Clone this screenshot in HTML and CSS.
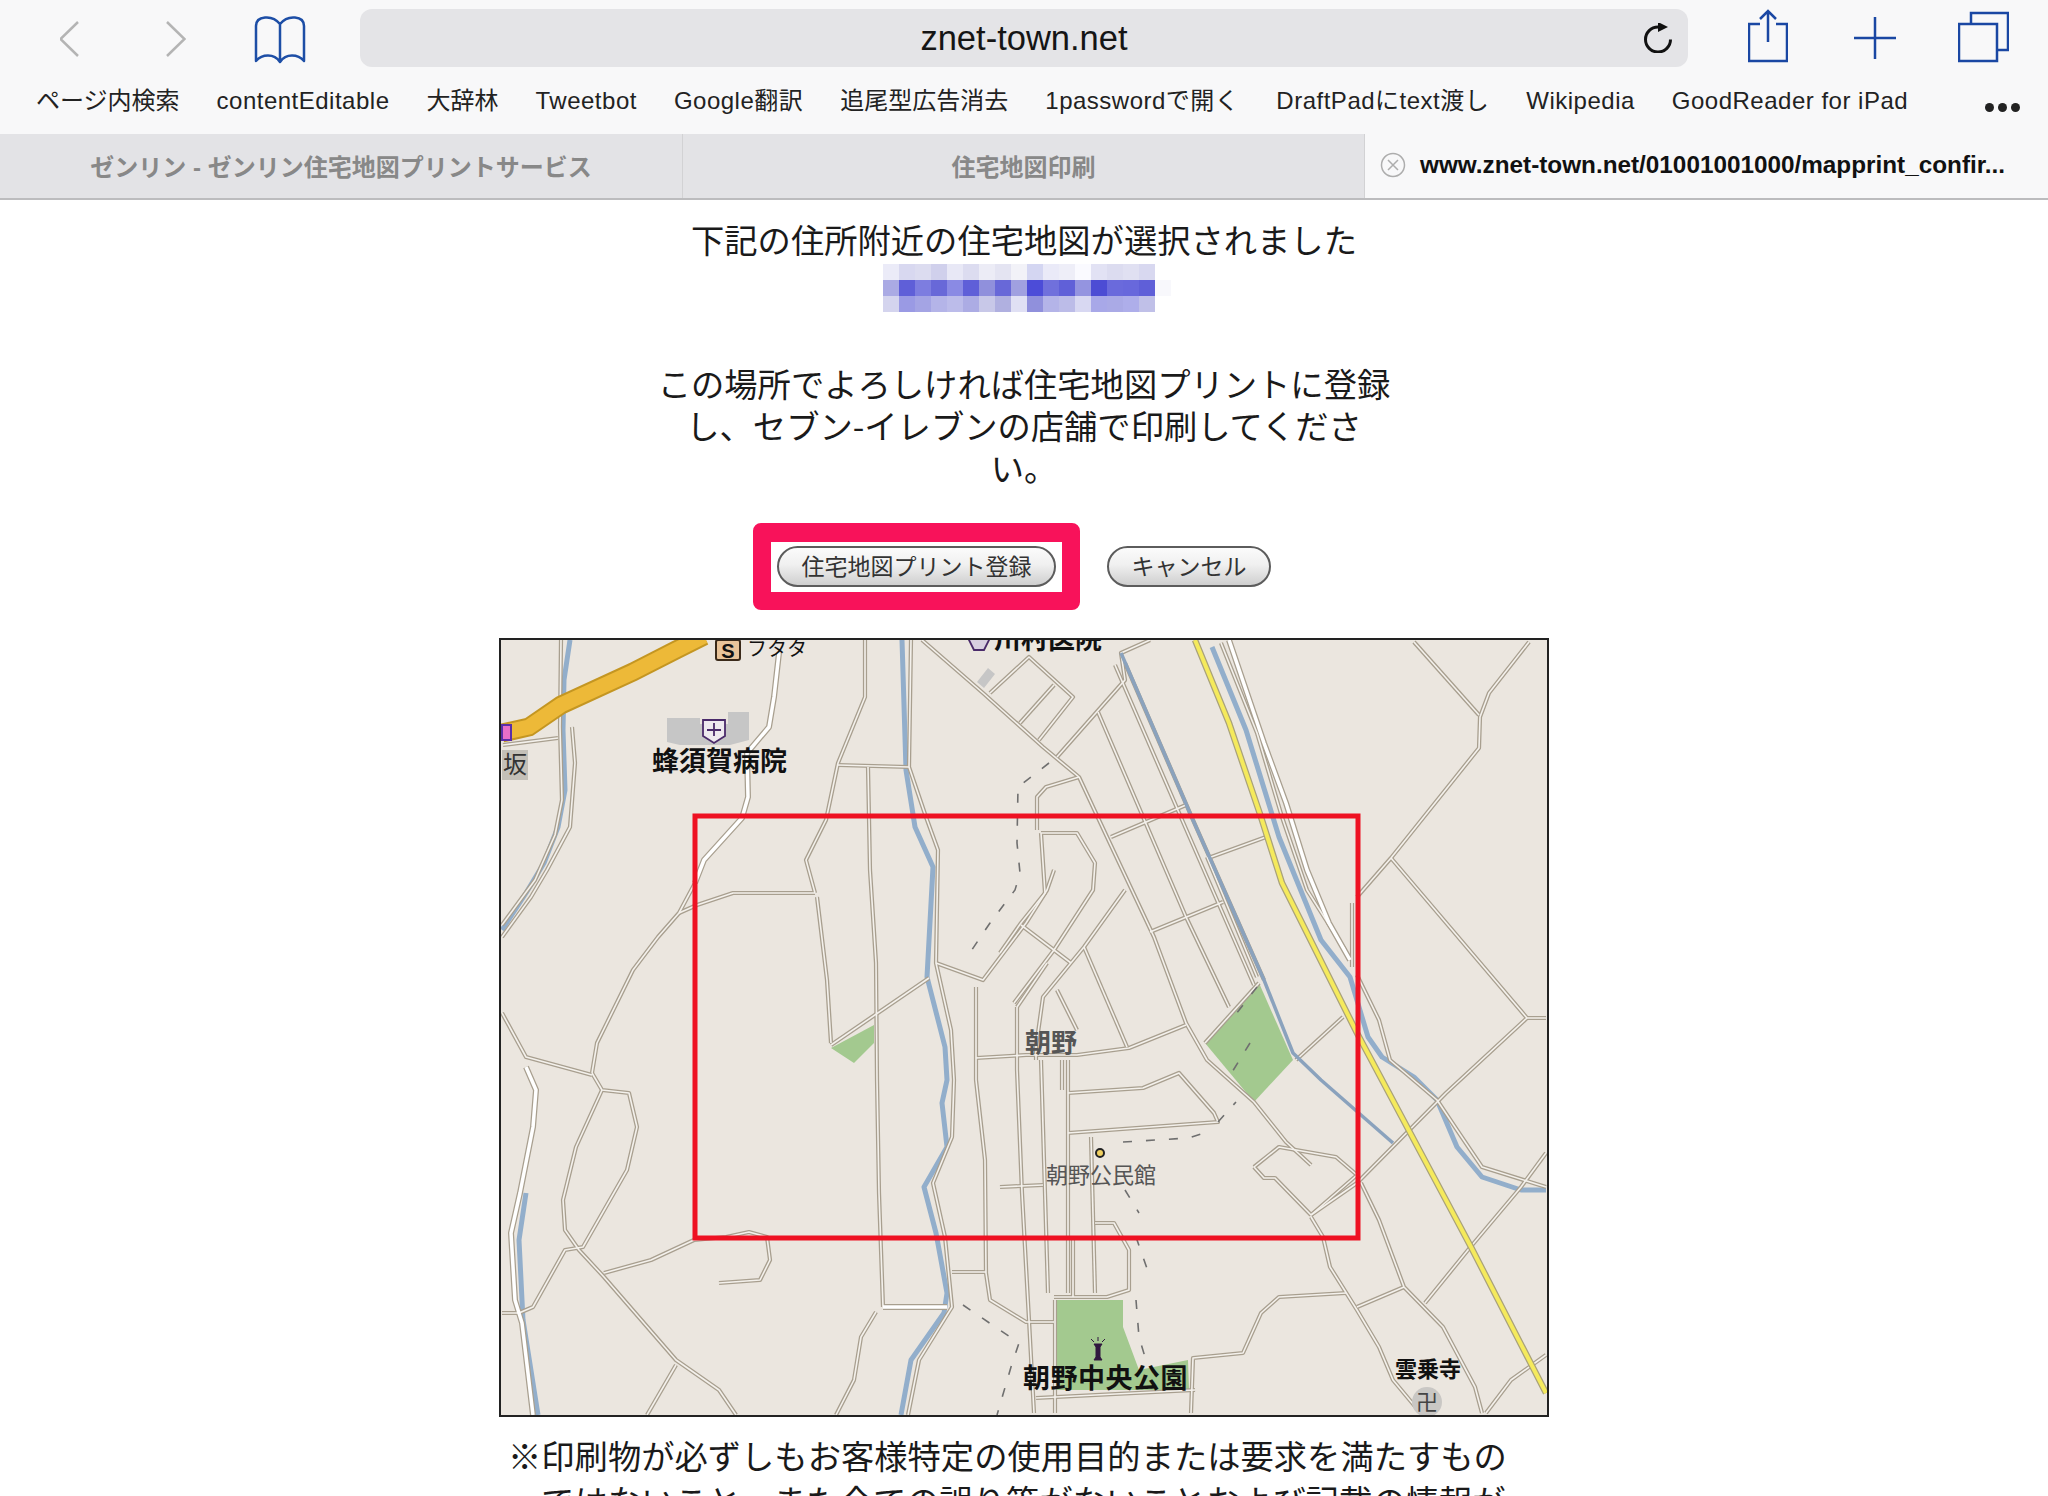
FILE: index.html
```html
<!DOCTYPE html>
<html lang="ja">
<head>
<meta charset="utf-8">
<title>住宅地図印刷</title>
<link rel="stylesheet" href="styles.css">
</head>
<body>
<div class="page">
  <header class="chrome">
    <div class="toolbar">
      <svg class="ic ic-back" viewBox="60 0 20 76"><path class="line-grey" d="M78 22 60.500 39 78 56"/></svg>
      <svg class="ic ic-forward" viewBox="166 0 20 76"><path class="line-grey" d="M167 22 184.500 39 167 56"/></svg>
      <svg class="ic ic-book" viewBox="254 0 52 76"><path class="line-blue" d="M280 62V24C276 19 270 17 265 17.500 259 18 256 21 256 26V61C262 54 274 53 280 62 286 53 298 54 304 61V26C304 21 301 18 295 17.500 290 17 284 19 280 24"/></svg>
      <div class="address">
        <span></span>
        <span class="host">znet-town.net</span>
        <svg class="ic-reload" viewBox="1644 24 28 30"><path class="line-black" d="M1658 28A12.500 12.500 0 1 0 1670.500 40.500"/><path class="fill-black" d="M1658 23 1668 28 1658 33Z"/></svg>
      </div>
      <svg class="ic ic-share" viewBox="1748 0 40 76"><path class="line-blue-2" d="M1760 24H1749V61H1787V24H1776M1768 42V11M1760 19 1768 11 1776 19"/></svg>
      <svg class="ic ic-plus" viewBox="1854 0 42 76"><path class="line-blue-2" d="M1854 38H1896M1875 17V59"/></svg>
      <svg class="ic ic-tabs" viewBox="1958 0 51 76"><path class="line-blue-2" d="M1959 24H1997V61H1959ZM1971 24V13H2008V50H1997"/></svg>
    </div>
    <nav class="bookmarks">
      <a class="mark mark-cjk">ページ内検索</a>
      <a class="mark">contentEditable</a>
      <a class="mark mark-cjk">大辞林</a>
      <a class="mark">Tweetbot</a>
      <a class="mark">Google翻訳</a>
      <a class="mark mark-cjk">追尾型広告消去</a>
      <a class="mark">1passwordで開く</a>
      <a class="mark">DraftPadにtext渡し</a>
      <a class="mark">Wikipedia</a>
      <a class="mark">GoodReader for iPad</a>
      <span class="more"><i></i><i></i><i></i></span>
    </nav>
    <div class="tabs">
      <div class="tab">ゼンリン - ゼンリン住宅地図プリントサービス</div>
      <div class="tab">住宅地図印刷</div>
      <div class="tab tab-active">
        <svg class="tab-close" viewBox="0 0 26 26"><circle cx="13" cy="13" r="11.500"/><path d="M8 8 18 18M18 8 8 18"/></svg>
        <span>www.znet-town.net/01001001000/mapprint_confir...</span>
      </div>
    </div>
  </header>
  <main class="content">
    <p class="lead">下記の住所附近の住宅地図が選択されました</p>
    <div class="mosaic">
      <span style="background:#ebebf8"></span><span style="background:#d8d8f0"></span><span style="background:#dcdcf0"></span><span style="background:#d0d0ec"></span><span style="background:#e8e8f6"></span><span style="background:#dcdcf0"></span><span style="background:#ececf6"></span><span style="background:#e4e4f2"></span><span style="background:#f2f2f8"></span><span style="background:#d4d6f2"></span><span style="background:#eaeaf8"></span><span style="background:#eeeef8"></span><span style="background:#fafaff"></span><span style="background:#e2e2f4"></span><span style="background:#dcdcf0"></span><span style="background:#e0e0f2"></span><span style="background:#d8d8f0"></span><span style="background:#fff"></span>
      <span style="background:#aaaae4"></span><span style="background:#5f5fd8"></span><span style="background:#7d7de0"></span><span style="background:#6868d8"></span><span style="background:#8a8ae4"></span><span style="background:#5f5fd8"></span><span style="background:#9090dc"></span><span style="background:#6868d8"></span><span style="background:#a0a0e0"></span><span style="background:#4c4cd8"></span><span style="background:#7070dc"></span><span style="background:#6060d8"></span><span style="background:#9494e0"></span><span style="background:#4c4cd4"></span><span style="background:#6a6adc"></span><span style="background:#6868dc"></span><span style="background:#5f5fd8"></span><span style="background:#f8f8fc"></span>
      <span style="background:#d4d4ee"></span><span style="background:#9a9ae4"></span><span style="background:#a4a4e4"></span><span style="background:#b4b4e8"></span><span style="background:#bcbcea"></span><span style="background:#acace4"></span><span style="background:#c8c8e8"></span><span style="background:#b0b0e0"></span><span style="background:#e0e0f4"></span><span style="background:#9090dc"></span><span style="background:#b4b4e8"></span><span style="background:#bcbce8"></span><span style="background:#d8d8f2"></span><span style="background:#a8a8e8"></span><span style="background:#aaaae6"></span><span style="background:#aeaeea"></span><span style="background:#c0c0e8"></span><span style="background:#fff"></span>
    </div>
    <p class="note">この場所でよろしければ住宅地図プリントに登録<br>し、セブン-イレブンの店舗で印刷してくださ<br>い。</p>
    <div class="actions">
      <div class="highlight"><button class="btn btn-register">住宅地図プリント登録</button></div>
      <button class="btn btn-cancel">キャンセル</button>
    </div>
    <div class="map">
      <svg class="map-svg" viewBox="501 640 1046 775">
        <defs>
          <g id="thin">
            <path d="M572 727 575 763 570 827 547 870 531 897 502 937"/>
            <path d="M561 640 560 727 562 800 555 835 535 880 502 925"/>
            <path d="M503 745 558 738"/>
            <path d="M865 640V697L838 763 826 820 806 860 815 893"/>
            <path d="M815 893H733L697 905 679 913"/>
            <path d="M817 897 827 980 831 1043"/>
            <path d="M838 765 909 767"/>
            <path d="M868 767 870 870 876 963 877 1080 879 1193 883 1307"/>
            <path d="M911 640 909 767 926 817 938 850 936 963 951 1030 954 1080 952 1137 933 1183 945 1237 952 1307 919 1360 908 1415"/>
            <path d="M831 1045 929 978"/>
            <path d="M936 963 983 980 1026 923 1047 890 1054 870"/>
            <path d="M976 987V1080L985 1160 986 1273 990 1300 1026 1322H1054"/>
            <path d="M952 1272H986"/>
            <path d="M876 1312 861 1337 854 1380 836 1415"/>
            <path d="M1017 1007 1017 1070 1022 1193 1029 1320 1034 1413"/>
            <path d="M1017 1007 1047 963"/>
            <path d="M976 1058 1026 1055H1077L1129 1048 1186 1025"/>
            <path d="M922 640 983 693 1043 747 1079 777 1107 837 1154 937 1186 1023 1207 1060 1254 1102 1286 1142 1311 1165"/>
            <path d="M990 693 1029 657 1073 697 1039 740"/>
            <path d="M1020 723 1054 685"/>
            <path d="M1057 757 1125 680 1121 653 1150 640"/>
            <path d="M1125 663 1193 820 1264 980"/>
            <path d="M1115 665 1183 822 1254 985"/>
            <path d="M1098 712 1186 917 1229 1007"/>
            <path d="M1111 837 1186 805"/>
            <path d="M1211 857 1266 837"/>
            <path d="M1150 932 1223 902"/>
            <path d="M1207 857 1257 977"/>
            <path d="M1037 830V797L1046 787 1079 777"/>
            <path d="M1041 833H1077L1095 863 1093 890 1054 950 1014 1003"/>
            <path d="M1041 833 1045 893 1021 923 1000 953"/>
            <path d="M1021 925 1071 963"/>
            <path d="M1125 890 1084 947 1043 997 1036 1047V1060"/>
            <path d="M1057 990 1077 1030"/>
            <path d="M1084 947 1127 1047"/>
            <path d="M1205 1043 1259 983"/>
            <path d="M1296 1060 1343 1017"/>
            <path d="M1221 643 1257 733 1282 817 1307 890 1345 950"/>
            <path d="M1352 903V967"/>
            <path d="M1357 897 1391 858 1479 748 1480 717 1489 693 1529 642"/>
            <path d="M1414 642 1479 715"/>
            <path d="M1391 858 1527 1018H1546"/>
            <path d="M1527 1018 1446 1093 1357 1183 1311 1215"/>
            <path d="M1357 975 1379 1020 1390 1060 1437 1100 1457 1130 1482 1167 1546 1187"/>
            <path d="M1361 1183 1379 1220 1404 1287 1443 1327 1475 1387 1482 1413"/>
            <path d="M1546 1153 1521 1187 1468 1250 1425 1303"/>
            <path d="M1546 1355 1511 1380 1486 1413"/>
            <path d="M1311 1217 1323 1237 1330 1267 1357 1310 1379 1347 1393 1380 1418 1410"/>
            <path d="M1346 1293 1279 1297 1261 1313 1243 1353 1193 1358 1191 1413"/>
            <path d="M1357 1307 1404 1287"/>
            <path d="M1254 1167 1279 1147 1336 1157 1357 1175M1254 1167 1264 1178H1275L1311 1215M1311 1215 1357 1175"/>
            <path d="M1068 1093 1143 1088 1179 1073 1214 1113 1218 1122 1068 1133"/>
            <path d="M1068 1060V1293"/>
            <path d="M1041 1060 1048 1293"/>
            <path d="M1062 1060V1090"/>
            <path d="M1091 1137 1095 1293"/>
            <path d="M1095 1223H1114L1129 1250V1290L1107 1297H1054"/>
            <path d="M1073 1240V1297"/>
            <path d="M1000 1187 1043 1185"/>
            <path d="M1055 1300V1413"/>
            <path d="M1036 1398 1195 1390"/>
            <path d="M502 1013 526 1057 592 1075"/>
            <path d="M592 1073 602 1090 629 1093 637 1127 627 1170 583 1247 565 1250 533 1307 519 1313H502"/>
            <path d="M602 1090 576 1147 563 1200 565 1230 579 1250 604 1277 676 1360 719 1390 736 1415"/>
            <path d="M676 1365 647 1415"/>
            <path d="M604 1273 651 1260 694 1240 726 1237 749 1232 767 1237 770 1260 760 1280 719 1283"/>
            <path d="M695 883 679 913 658 937 633 970 597 1043 592 1073"/>
          </g>
          <g id="thick">
            <path d="M779 653 774 697 769 727 747 753 748 797 742 818 704 860 695 883"/>
            <path d="M883 1307H947"/>
            <path d="M1229 640 1264 743 1286 803 1307 870 1329 923 1350 960"/>
            <path d="M526 1067 536 1090 533 1127 520 1193 511 1233 515 1300 522 1323 533 1415"/>
          </g>
        </defs>
        <rect class="land" x="501" y="640" width="1046" height="775"/>
        <path class="green" d="M831 1048 874 1025V1043L854 1063Z"/>
        <path class="green" d="M1259 983 1293 1060 1254 1102 1205 1043Z"/>
        <path class="green" d="M1054 1300H1123V1327L1139 1370 1188 1360 1189 1390H1057Z"/>
        <path class="river" d="M570 640 564 680 563 730 565 790 558 827 544 863 526 893 502 930"/>
        <path class="river" d="M902 640 906 770 915 827 933 867 927 977 945 1047 947 1080 942 1103 947 1147 924 1187 936 1233 947 1293 944 1313 911 1360 901 1415"/>
        <path class="river" d="M1212 647 1246 730 1279 837 1321 940 1350 977 1368 1037 1382 1057 1414 1077 1437 1100 1457 1147 1482 1177 1521 1190H1546"/>
        <path class="river" d="M526 1193 519 1240 523 1320 538 1415"/>
        <use class="edge" href="#thin"/>
        <use class="edge-thick" href="#thick"/>
        <use class="core" href="#thin"/>
        <use class="core-thick" href="#thick"/>
        <path class="river river-thin" d="M1121 653 1193 820 1264 980 1293 1053 1321 1080 1393 1143"/>
        <path class="dash" d="M1049 763 1018 787 1017 843 1020 873 1015 890 990 923 965 960"/>
        <path class="dash" d="M1123 1142 1189 1138 1204 1133M1218 1122 1236 1102"/>
        <path class="dash" d="M1257 987 1229 1023M1250 1043 1229 1077"/>
        <path class="dash" d="M1125 1190 1139 1213M1136 1237 1150 1277M1136 1300 1139 1337 1145 1357"/>
        <path class="dash" d="M963 1305 1019 1343 1011 1367 997 1415"/>
        <path class="rail-edge" d="M1195 640 1229 723 1261 817 1282 883 1357 1033 1471 1247 1546 1393"/>
        <path class="rail" d="M1195 640 1229 723 1261 817 1282 883 1357 1033 1471 1247 1546 1393"/>
        <path class="highway-edge" d="M502 733 529 727 561 705 633 672 676 650 704 636"/>
        <path class="highway" d="M502 733 529 727 561 705 633 672 676 650 704 636"/>
        <rect class="ic-ic" x="502" y="725" width="9" height="15"/>
        <rect class="label-bg" x="502" y="750" width="26" height="30"/>
        <path class="building" d="M667 718H700V724H728V712H749V740L730 745H680L667 742Z"/>
        <path class="building" d="M977 682 988 668 995 674 984 688Z"/>
        <path class="shield" d="M703 720H725V736L714 743 703 736ZM714 723V736M707 730H721"/>
        <path class="shield-top" d="M968 638H990L984 650H974Z"/>
        <rect class="gas" x="716" y="640" width="24" height="20" rx="2"/>
        <text class="gas-s" x="728" y="658">S</text>
        <text class="lab lab-black" x="747" y="656">フタタ</text>
        <text class="lab lab-bold" x="652" y="771">蜂須賀病院</text>
        <text class="lab lab-bold" x="994" y="649">川村医院</text>
        <text class="lab lab-ban" x="503" y="773">坂</text>
        <text class="lab lab-grey-bold" x="1025" y="1052">朝野</text>
        <text class="lab lab-grey" x="1046" y="1183">朝野公民館</text>
        <text class="lab lab-park" x="1023" y="1388">朝野中央公園</text>
        <text class="lab lab-temple" x="1395" y="1377">雲乗寺</text>
        <circle class="temple" cx="1427" cy="1402" r="15"/>
        <text class="lab lab-manji" x="1416" y="1410">卍</text>
        <circle class="hall" cx="1100" cy="1153" r="4"/>
        <path class="fountain" d="M1094 1344H1102L1100 1347V1357L1102 1360H1094L1096 1357V1347ZM1091 1339 1094 1342M1098 1337V1341M1105 1339 1102 1342"/>
        <rect class="area" x="695" y="816" width="663" height="422"/>
      </svg>
    </div>
    <p class="disclaimer"><span class="kome">※</span>印刷物が必ずしもお客様特定の使用目的または要求を満たすもの<span class="disclaimer-cont">ではないこと、また全ての誤り等がないことおよび記載の情報が</span></p>
  </main>
</div>
</body>
</html>
```

FILE: styles.css
```css
* { box-sizing: border-box; }
html, body { margin: 0; background: #fff; }
body { font-family: "Liberation Sans", "Noto Sans CJK JP", sans-serif; color: #111; }
.page { width: 2048px; height: 1496px; overflow: hidden; }

.chrome { background: #f8f8f9; }
.toolbar { display: flex; align-items: center; height: 76px; padding-left: 60px; }
.ic { height: 76px; display: block; flex: none; }
.ic-back { width: 20px; }
.ic-forward { width: 20px; margin-left: 86px; }
.ic-book { width: 52px; margin-left: 68px; }
.address { width: 1328px; height: 58px; margin-left: 54px; background: #e4e4e7; border-radius: 12px; display: grid; grid-template-columns: 1fr auto 1fr; align-items: center; padding: 0 16px; }
.host { font-size: 34.500px; color: #151515; }
.ic-reload { width: 28px; height: 30px; justify-self: end; }
.ic-share { width: 40px; margin-left: 60px; }
.ic-plus { width: 42px; margin-left: 66px; }
.ic-tabs { width: 51px; margin-left: 62px; }
.line-grey, .line-blue, .line-blue-2, .line-black { fill: none; stroke-linejoin: miter; }
.line-grey { stroke: #b4b4b4; stroke-width: 2.500; }
.line-blue { stroke: #1d4ea6; stroke-width: 2.500; stroke-linejoin: round; }
.line-blue-2 { stroke: #1a47a3; stroke-width: 2.500; }
.line-black { stroke: #111; stroke-width: 3; }
.fill-black { fill: #111; }

.bookmarks { display: flex; align-items: baseline; height: 58px; padding: 8px 28px 0 36px; gap: 37px; font-size: 24px; line-height: 34px; color: #222; white-space: nowrap; }
.mark { display: block; letter-spacing: 0.500px; }
.mark-cjk { letter-spacing: 0; }
.more { display: flex; gap: 4px; margin-left: auto; align-self: center; padding-bottom: 4px; }
.more i { width: 9px; height: 9px; border-radius: 50%; background: #222; }

.tabs { display: grid; grid-template-columns: 683px 682px 683px; height: 66px; border-bottom: 2px solid #bcbcbe; }
.tab { display: flex; align-items: center; justify-content: center; padding-bottom: 2px; background: #e3e3e6; font-size: 24px; font-weight: 700; color: #888; border-right: 1px solid #d2d2d4; }
.tab-active { justify-content: flex-start; background: #f8f8f9; color: #111; border-right: 0; padding-left: 15px; gap: 14px; font-size: 24.300px; }
.tab-close { width: 26px; height: 26px; fill: none; stroke: #adadad; stroke-width: 1.500; flex: none; }

.content { display: flex; flex-direction: column; align-items: center; font-family: "Noto Sans CJK JP", "Liberation Sans", sans-serif; font-size: 33.300px; line-height: 42px; color: #1a1a1a; }
.lead { margin: 18px 0 0; }
.mosaic { display: grid; grid-template-columns: repeat(18, 16px); grid-auto-rows: 16px; margin: 4px 0 0 6px; }
.note { margin: 50px 0 0; text-align: center; }
.actions { display: flex; gap: 51px; margin-top: 58px; }
.highlight { position: relative; display: flex; }
.highlight::before { content: ""; position: absolute; left: -24px; right: -24px; top: -23px; bottom: -23px; border: solid #f8125a; border-width: 19px 18px 18px; border-radius: 8px; pointer-events: none; }
.btn { height: 41px; padding: 0 0 2px; border: 2px solid #5c5c5c; border-radius: 21px; background: linear-gradient(#fbfbfb, #f0f0f0 45%, #cfcfcf); font-family: inherit; font-size: 23px; line-height: 1; color: #333; }
.btn-register { width: 279px; }
.btn-cancel { width: 164px; }

.map { width: 1050px; height: 779px; margin-top: 51px; border: 2px solid #222; flex: none; }
.map-svg { display: block; width: 1046px; height: 775px; }
.land { fill: #ebe6df; }
.green { fill: #a3c98f; }
.river { fill: none; stroke: #92aecb; stroke-width: 5; stroke-linejoin: round; }
.river-thin { stroke-width: 3.500; stroke: #8aa2bd; }
.edge { fill: none; stroke: #a89f8f; stroke-width: 4.200; stroke-linejoin: round; }
.core { fill: none; stroke: #f4f1ec; stroke-width: 1.600; stroke-linejoin: round; }
.edge-thick { fill: none; stroke: #a89f8f; stroke-width: 6; stroke-linejoin: round; }
.core-thick { fill: none; stroke: #fff; stroke-width: 3.500; stroke-linejoin: round; }
.dash { fill: none; stroke: #6f6f6f; stroke-width: 1.600; stroke-dasharray: 9 14; }
.rail-edge { fill: none; stroke: #a9a27a; stroke-width: 6.500; }
.rail { fill: none; stroke: #f5ea5c; stroke-width: 4; }
.highway-edge { fill: none; stroke: #c49622; stroke-width: 19; }
.highway { fill: none; stroke: #edb938; stroke-width: 15; }
.ic-ic { fill: #e86fc8; stroke: #5a2fa8; stroke-width: 2; }
.label-bg { fill: #c4c0b8; }
.building { fill: #c6c6c6; }
.shield { fill: #eee9ef; stroke: #4a2a6a; stroke-width: 1.800; }
.shield-top { fill: #d8cfe0; stroke: #4a2a6a; stroke-width: 1.800; }
.gas { fill: #e9c49a; stroke: #3a2a1a; stroke-width: 2; }
.gas-s { fill: #111; font: 700 20px "Liberation Sans", sans-serif; text-anchor: middle; }
.lab { font-family: "Noto Sans CJK JP", sans-serif; fill: #111; }
.lab-black { font-size: 20px; }
.lab-bold { font-size: 27px; font-weight: 700; }
.lab-ban { font-size: 24px; fill: #333; }
.lab-grey-bold { font-size: 26px; font-weight: 700; fill: #555; }
.lab-grey { font-size: 22px; fill: #555; }
.lab-park { font-size: 27px; font-weight: 700; letter-spacing: 0.500px; }
.lab-temple { font-size: 22px; font-weight: 700; }
.lab-manji { font-size: 22px; fill: #444; }
.temple { fill: #c9c7c4; }
.hall { fill: #f0d060; stroke: #222; stroke-width: 2; }
.fountain { fill: #30183f; stroke: #30183f; stroke-width: 1; }
.area { fill: none; stroke: #ee1122; stroke-width: 5; }

.disclaimer { margin: 17px 0 0; width: 1050px; padding-left: 9px; white-space: nowrap; }
.kome { font-weight: 700; }
.disclaimer-cont { display: block; margin: 3px 0 0 1em; }
```
